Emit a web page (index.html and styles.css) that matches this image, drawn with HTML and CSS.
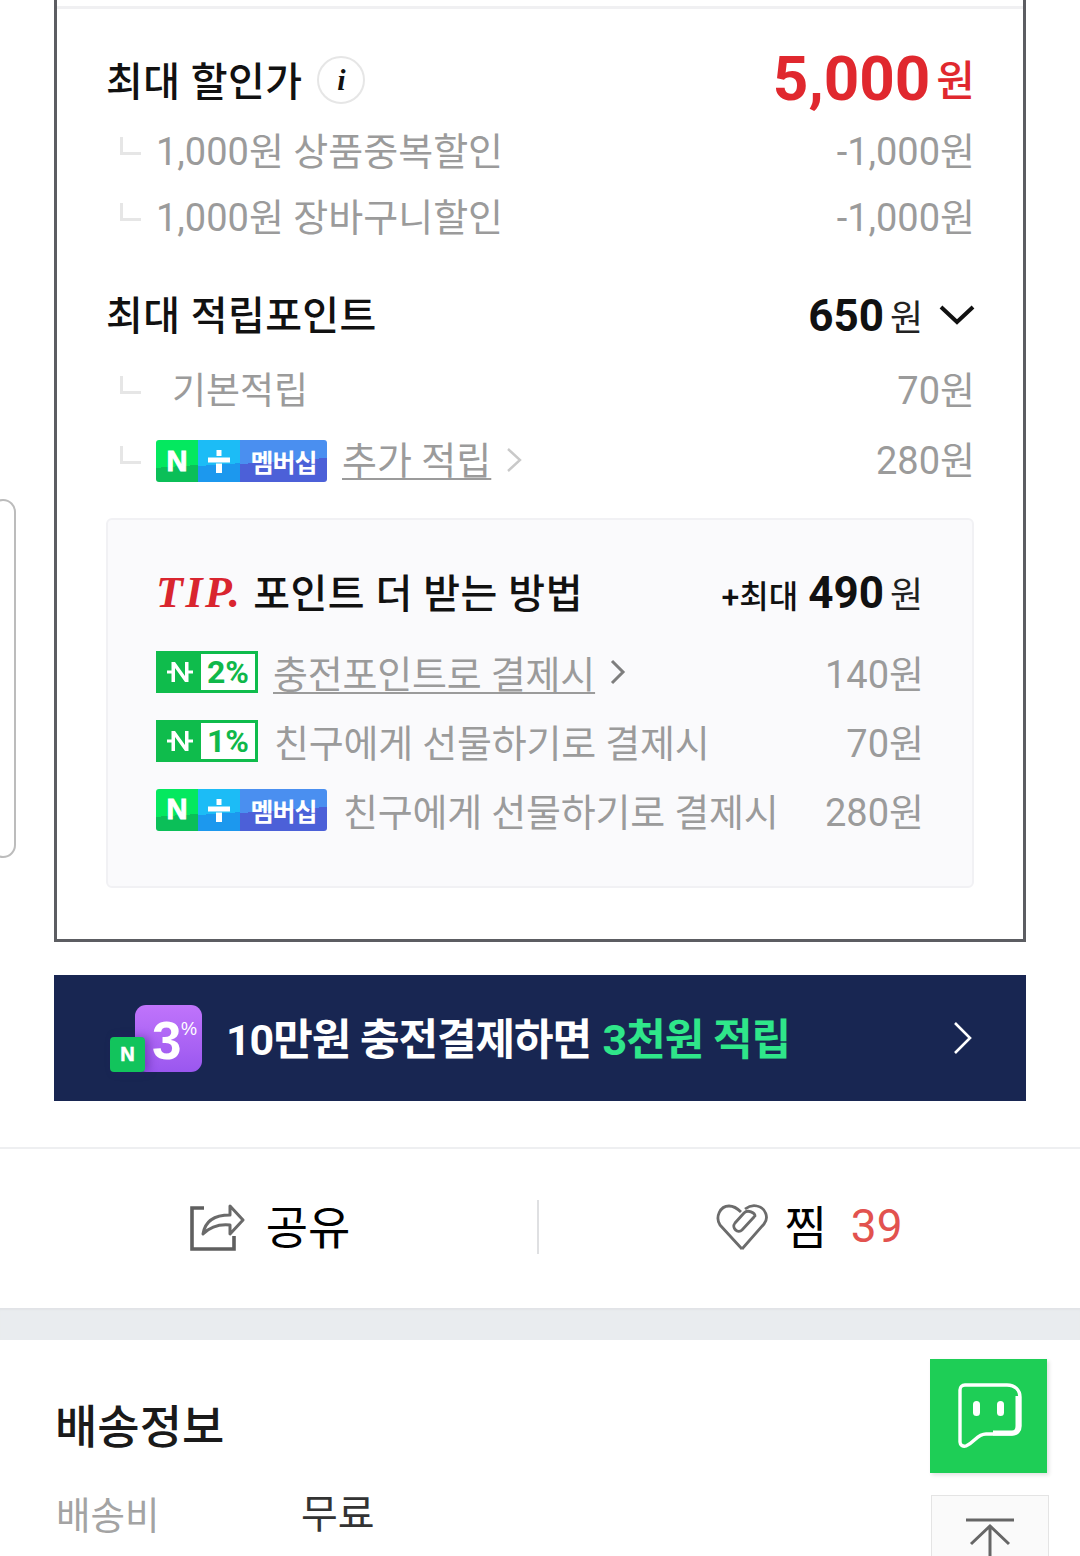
FILE: index.html
```html
<!DOCTYPE html>
<html lang="ko">
<head>
<meta charset="utf-8">
<title>최대 할인가</title>
<link rel="stylesheet" href="styles.css">
</head>
<body>
<div class="page">
  <main class="box">
    <div class="box-line"></div>
    <div class="row r-main">
      <div class="left"><span class="h1">최대 할인가</span><span class="info">i</span></div>
      <div class="price"><b>5,000</b><span>원</span></div>
    </div>
    <div class="row r-sub">
      <div class="left"><i class="elbow"></i><span class="g">1,000원 상품중복할인</span></div>
      <span class="g">-1,000원</span>
    </div>
    <div class="row r-sub">
      <div class="left"><i class="elbow"></i><span class="g">1,000원 장바구니할인</span></div>
      <span class="g">-1,000원</span>
    </div>
    <div class="row r-point">
      <span class="h2">최대 적립포인트</span>
      <div class="right"><b class="num">650</b><span class="won">원</span>
        <svg class="chev-down" width="36" height="22" viewBox="0 0 36 22"><path d="M2 3l16 15L34 3" fill="none" stroke="#111" stroke-width="4"/></svg>
      </div>
    </div>
    <div class="row r-pt">
      <div class="left"><i class="elbow"></i><span class="g indent">기본적립</span></div>
      <span class="g">70원</span>
    </div>
    <div class="row r-pt">
      <div class="left"><i class="elbow e-tight"></i>
        <span class="mem"><span class="mem-n">N</span><span class="mem-p"><svg width="26" height="26" viewBox="0 0 26 26"><path d="M2 9.500h22v5H2zM10.500 2h5v6h-5zM10 15.500h6V25h-6z" fill="#fff"/></svg></span><span class="mem-t">멤버십</span></span>
        <a class="link l-add">추가 적립</a>
        <svg class="chev" width="16" height="26" viewBox="0 0 16 26"><path d="M2 2l12 11L2 24" fill="none" stroke="#c9c9c9" stroke-width="2.400"/></svg>
      </div>
      <span class="g">280원</span>
    </div>

    <section class="tip">
      <div class="row tip-title">
        <div class="left"><em class="tip-mark">TIP.</em><span class="tip-h">포인트 더 받는 방법</span></div>
        <div class="right"><span class="tip-max">+최대</span><b class="num n-tip">490</b><span class="won w-tip">원</span></div>
      </div>
      <div class="row tip-row">
        <div class="left">
          <span class="np"><span class="np-n"><svg width="30" height="26" viewBox="0 0 30 26"><path d="M6.500 3H10l10 14V3h3.500v20H20L10 9v14H6.500z" fill="#fff"/><path d="M2 11.500h5v3H2zM23 11.500h5v3h-5z" fill="#fff"/></svg></span><span class="np-v">2%</span></span>
          <a class="link l-np">충전포인트로 결제시</a>
          <svg class="chev c-dark" width="16" height="26" viewBox="0 0 16 26"><path d="M2 2l11 11L2 24" fill="none" stroke="#7e7e7e" stroke-width="3"/></svg>
        </div>
        <span class="g">140원</span>
      </div>
      <div class="row tip-row">
        <div class="left">
          <span class="np"><span class="np-n"><svg width="30" height="26" viewBox="0 0 30 26"><path d="M6.500 3H10l10 14V3h3.500v20H20L10 9v14H6.500z" fill="#fff"/><path d="M2 11.500h5v3H2zM23 11.500h5v3h-5z" fill="#fff"/></svg></span><span class="np-v">1%</span></span>
          <span class="g t-np">친구에게 선물하기로 결제시</span>
        </div>
        <span class="g">70원</span>
      </div>
      <div class="row tip-row">
        <div class="left">
          <span class="mem"><span class="mem-n">N</span><span class="mem-p"><svg width="26" height="26" viewBox="0 0 26 26"><path d="M2 9.500h22v5H2zM10.500 2h5v6h-5zM10 15.500h6V25h-6z" fill="#fff"/></svg></span><span class="mem-t">멤버십</span></span>
          <span class="g t-mem">친구에게 선물하기로 결제시</span>
        </div>
        <span class="g">280원</span>
      </div>
    </section>
  </main>

  <div class="banner">
    <span class="logo"><span class="logo-3">3<sup>%</sup></span><span class="logo-n">N</span></span>
    <span class="banner-t">10만원 충전결제하면 <span class="mint">3천원 적립</span></span>
    <svg class="banner-c" width="20" height="34" viewBox="0 0 20 34"><path d="M2 2l15 15L2 32" fill="none" stroke="#fff" stroke-width="2.600"/></svg>
  </div>

  <div class="actions">
    <div class="act act-l">
      <svg class="ic-share" width="56" height="50" viewBox="0 0 56 50">
        <path d="M15 6H3v41h42V34" fill="none" stroke="#5f5f5f" stroke-width="3.600"/>
        <path d="M14 32c2-13 11-19 27-19V4l13 14-13 14v-9c-10-1-19 1-27 9z" fill="none" stroke="#6a6a6a" stroke-width="3" stroke-linejoin="round"/>
      </svg>
      <span class="act-t">공유</span>
    </div>
    <div class="act act-r">
      <svg class="ic-heart" width="52" height="48" viewBox="0 0 52 48">
        <path d="M26 46L4 22C-1 14 4 3 13 3c5 0 9 3 12 6M29 6c4-3 8-4 12-3 9 2 12 12 7 18L26 46" fill="none" stroke="#6c6c6c" stroke-width="2.800" stroke-linejoin="round"/>
        <path d="M38 14L26 27c-4 4-11-2-7-7l9-10c4-4 11 0 11 3" fill="none" stroke="#6c6c6c" stroke-width="2.800" stroke-linecap="round"/>
      </svg>
      <span class="act-t zzim">찜</span>
      <span class="count">39</span>
    </div>
  </div>

  <div class="band"></div>

  <section class="ship">
    <h2 class="ship-h">배송정보</h2>
    <div class="ship-row"><span class="ship-l">배송비</span><span class="ship-v">무료</span></div>
  </section>

  <div class="bracket"></div>
  <button class="chat" aria-label="채팅">
    <svg class="chat-ic" width="66" height="68" viewBox="0 0 66 68">
      <path d="M8 3h42c8 0 13 5 13 12v29c0 5-3 8-8 8H29c-9 0-11 8-20 12-3 1-6-1-6-4V8c0-3 2-5 5-5z" fill="none" stroke="#fff" stroke-width="3.400"/>
      <path d="M61 14v30c0 5-2 7-6 7H36" fill="none" stroke="#fff" stroke-width="5"/>
      <rect x="16" y="19" width="7" height="15" rx="3.500" fill="#fff"/>
      <rect x="40" y="19" width="7" height="15" rx="3.500" fill="#fff"/>
    </svg>
  </button>
  <button class="top" aria-label="맨 위로">
    <svg width="50" height="40" viewBox="0 0 50 40">
      <path d="M1 2h48" stroke="#666" stroke-width="3"/>
      <path d="M25 8v32M6 26L25 8l19 18" fill="none" stroke="#666" stroke-width="3"/>
    </svg>
  </button>
</div>
</body>
</html>
```

FILE: styles.css
```css
* { box-sizing: border-box; }
html, body { margin: 0; padding: 0; background: #fff; }
body {
  font-family: Roboto, "Noto Sans CJK KR", sans-serif;
  color: #111;
}
.page { position: relative; width: 1080px; height: 1556px; overflow: hidden; }

.box {
  margin: 0 54px;
  padding: 6px 49px 51px 49px;
  border: 3px solid #5c5d62;
  border-top: 0;
}
.box-line { height: 3px; margin: 0 -49px 36px; background: #f0f0f2; }
.row { display: flex; justify-content: space-between; align-items: center; }
.left, .right { display: flex; align-items: center; }

.r-main { height: 70px; margin-bottom: 3px; }
.r-sub { height: 66px; }
.r-point { height: 70px; margin-top: 30px; margin-bottom: 5px; }
.r-pt { height: 70px; }

.h1 { font-size: 40px; font-weight: 500; letter-spacing: .4px; margin-bottom: 2px; }
.h2 { font-size: 40px; font-weight: 500; letter-spacing: .4px; margin-bottom: 5px; }
.info {
  display: flex; align-items: center; justify-content: center;
  width: 48px; height: 48px; margin-left: 15px;
  border: 2px solid #e6e6e6; border-radius: 50%;
  font: italic bold 30px "Liberation Serif", serif; color: #111;
}
.price { color: #e0282e; margin-bottom: 4px; margin-right: -1px; white-space: nowrap; }
.price b { font-size: 62px; font-weight: 700; }
.price span { font-size: 42px; margin-left: 6px; font-weight: 500; vertical-align: 4px; }

.g { font-size: 38px; color: #9b9b9b; white-space: nowrap; margin-bottom: 5px; }
.tip .g { margin-bottom: 0; letter-spacing: -.2px; }
.row > .g { margin-right: -1px; letter-spacing: 0; }
.elbow {
  display: block; flex: none;
  width: 21px; height: 18px; margin: 0 15px 10px 14px;
  border-left: 3px solid #e6e6e6; border-bottom: 3px solid #e6e6e6;
}
.e-tight { margin-right: 15px; }
.g.indent { margin-left: 16px; font-size: 37px; }

.num { font-size: 44px; font-weight: 700; }
.won { font-size: 36px; color: #222; margin-left: 6px; }
.chev-down { margin-left: 16px; }
.right { align-items: baseline; }
.r-point .chev-down { align-self: center; margin-right: -1px; }

.mem {
  display: flex; flex: none; width: 171px; height: 42px; margin-top: 2px;
  border-radius: 3px; overflow: hidden;
  color: #fff; font-weight: 700;
}
.tip .mem { margin-top: 0; }
.mem-n, .mem-p, .mem-t { display: flex; align-items: center; justify-content: center; height: 100%; }
.mem-n { width: 42px; font: bold 29px "Liberation Sans", sans-serif; -webkit-text-stroke: 1px #fff;
  background: linear-gradient(176deg, #04e85f 0 62%, #0bbf58 62%); }
.mem-p { width: 42px; background: linear-gradient(176deg, #1cbcf6 0 58%, #1c98ee 58%); }
.mem-t { width: 87px; font-size: 25px; letter-spacing: -1px; font-weight: 700;
  background: linear-gradient(176deg, #4a8ff0 0 50%, #4c60d8 50%); }

.link { font-size: 38px; color: #9b9b9b; text-decoration: underline; text-decoration-thickness: 2px; text-underline-offset: 4px; white-space: nowrap; margin-bottom: 5px; }
.l-add { margin-left: 15px; }
.chev { margin-left: 15px; }
.c-dark { margin-left: 15px; }

.tip {
  margin-top: 23px; height: 370px;
  padding: 37px 49px 0 48px;
  border: 2px solid #f1f1f4; border-radius: 6px;
  background: #fafafc;
}
.tip-title { height: 70px; margin-bottom: 10px; }
.tip-mark { font: italic bold 44px "Liberation Serif", serif; letter-spacing: 2.500px; color: #d9252f; }
.tip-h { font-size: 40px; font-weight: 500; letter-spacing: .5px; margin-left: 11px; margin-bottom: 2px; }
.tip-max { font-size: 32px; font-weight: 500; }
.n-tip { margin-left: 10px; }
.w-tip { font-size: 36px; }
.tip-row { height: 69px; }
.tip .link { margin-bottom: 0; letter-spacing: -.2px; }

.np {
  display: flex; flex: none; width: 102px; height: 42px;
  border: 3px solid #0fbc4c; background: #0fbc4c;
}
.np-n { width: 42px; display: flex; align-items: center; justify-content: center; }
.np-v { flex: 1; display: flex; align-items: center; justify-content: center;
  background: #fff; color: #10b84a; font-size: 32px; font-weight: 700; white-space: nowrap; }
.l-np { margin-left: 15px; }
.t-np { margin-left: 16px; }
.t-mem { margin-left: 16px; }

.banner {
  position: relative;
  display: flex; align-items: center;
  margin: 33px 54px 0; height: 126px; padding-left: 56px;
  background: #182652;
}
.logo { position: relative; display: block; flex: none; width: 92px; height: 67px; margin-right: 24px; }
.logo-3 {
  position: absolute; left: 25px; top: 0; width: 67px; height: 67px;
  border-radius: 11px; color: #fff;
  background: linear-gradient(#c074fb, #9a57ef);
  font: 700 53px/71px "Liberation Sans", sans-serif; padding-left: 17px;
}
.logo-3 sup { position: absolute; left: 46px; top: -11px; font-size: 18px; font-weight: 400; }
.logo-n {
  position: absolute; left: 0; top: 32px; width: 35px; height: 35px;
  border-radius: 4px; background: #12c45c; color: #fff; text-align: center;
  font: 700 20px/35px "Liberation Sans", sans-serif; -webkit-text-stroke: .6px #fff;
  box-shadow: 4px 0 8px rgba(60,20,120,.4);
}
.banner-t { color: #fff; font-size: 43px; font-weight: 700; letter-spacing: -1.050px; white-space: nowrap; margin-bottom: 4px; }
.mint { color: #2fe68a; margin-left: 2px; }
.banner-c { position: absolute; right: 53px; top: 46px; }

.actions {
  display: flex; margin-top: 46px; height: 161px;
  border-top: 2px solid #eeeff1;
  align-items: center;
}
.act { height: 54px; display: flex; align-items: center; justify-content: center; margin-bottom: 4px; }
.act-l { flex: 0 0 537px; padding-left: 2px; }
.act-r { flex: 1; border-left: 2px solid #dfe0e2; }
.act-t { font-size: 46px; font-weight: 400; color: #000; margin-left: 21px; margin-bottom: 6px; }
.zzim { margin-left: 16px; }
.count { font-size: 46px; color: #e2524f; margin-left: 24px; margin-bottom: 2px; }

.band { height: 32px; background: #e9ecef; box-shadow: inset 0 3px 2px -1px #e1e3e6; }

.ship { padding: 58px 55px 0; }
.ship-h { margin: 0 0 26px; font-size: 46px; line-height: 58px; font-weight: 500; color: #1a1a1a; }
.ship-row { display: flex; align-items: center; height: 58px; padding-left: 1px; }
.ship-l { width: 245px; font-size: 37.500px; color: #a3a3a3; margin-top: 2px; }
.ship-v { font-size: 40px; color: #333; }

.bracket {
  position: absolute; left: -10px; top: 499px; width: 26px; height: 359px;
  border: 2px solid #bcbcbc; border-radius: 16px; background: #fff;
}
.chat {
  position: absolute; left: 930px; top: 1359px; width: 117px; height: 114px;
  padding: 0; border: 0; background: #1ece56;
  display: flex; align-items: center; justify-content: center;
  box-shadow: 2px 2px 4px rgba(0,0,0,.12);
}
.chat-ic { margin-left: 3px; }
.top {
  position: absolute; left: 931px; top: 1495px; width: 118px; height: 90px;
  padding: 22px 0 0; border: 1px solid #e4e4e4; background: #fafafa;
  display: flex; justify-content: center; align-items: flex-start;
}
```
